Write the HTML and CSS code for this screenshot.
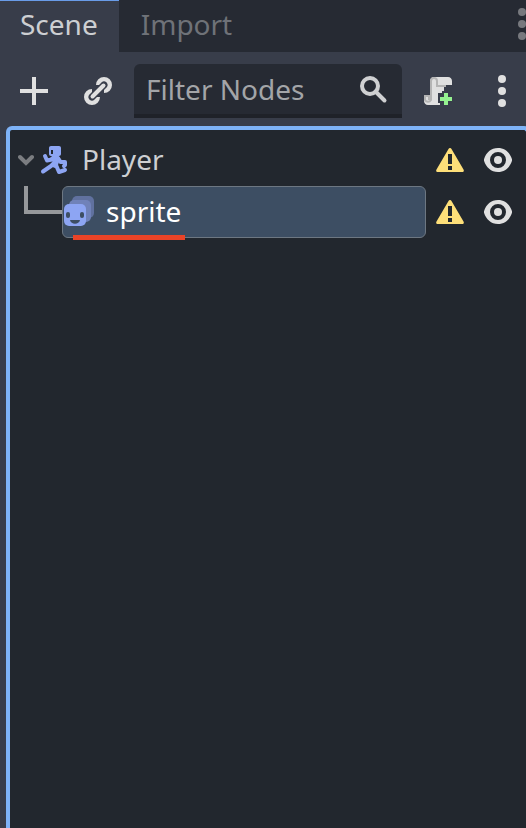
FILE: index.html
```html
<!DOCTYPE html>
<html lang="en">
<head>
<meta charset="utf-8">
<meta name="viewport" content="width=device-width, initial-scale=1">
<title>Scene</title>
<link rel="stylesheet" href="styles.css">
</head>
<body>
<svg class="defs" aria-hidden="true">
  <symbol id="warning" viewBox="0 0 32 32">
    <path fill="#fedf79" d="M16 4c.7 0 1.2.3 1.5.9l12 20.5c.9 1.400.1 2.600-1.300 2.600H3.800c-1.400 0-2.200-1.200-1.300-2.600l12-20.500c.3-.6.8-.9 1.500-.9z"/>
    <path fill="#22272e" d="M14 10h4v10h-4zM14 22h4v4h-4z"/>
  </symbol>
  <symbol id="eye" viewBox="0 0 32 32">
    <path fill="#e0e0e0" fill-rule="evenodd" d="M16 4C9 4 4.200 8.500 2 15.200v1.600C4.200 23.500 9 28 16 28s11.800-4.500 14-11.200v-1.600C27.800 8.500 23 4 16 4zm0 4a8 8 0 1 1 0 16 8 8 0 0 1 0-16z"/>
    <circle cx="16" cy="16" r="4" fill="#e0e0e0"/>
  </symbol>
  <symbol id="dots" viewBox="0 0 8 32">
    <circle cx="4" cy="4" r="4"/><circle cx="4" cy="16" r="4"/><circle cx="4" cy="28" r="4"/>
  </symbol>
</svg>
<main class="dock">
  <nav class="tabs">
    <button class="tab active">Scene</button>
    <button class="tab">Import</button>
    <button class="tab-menu" aria-label="Dock options"><svg class="dots"><use href="#dots"/></svg></button>
  </nav>
  <div class="toolbar">
    <button class="tool" aria-label="Add node">
      <svg class="icon" viewBox="0 0 32 32"><path fill="#e0e0e0" d="M14 2h4v12h12v4H18v12h-4V18H2v-4h12z"/></svg>
    </button>
    <button class="tool" aria-label="Instance scene">
      <svg class="icon" viewBox="0 0 32 32">
        <g fill="none" stroke="#e0e0e0" stroke-width="5">
          <path d="M16.500 10a5.500 5.500 0 1 1 5.500 5.500"/>
          <path d="M15.500 22a5.500 5.500 0 1 1-5.500-5.500"/>
        </g>
        <path d="M10 22L22 10" stroke="#383d4a" stroke-width="7" stroke-linecap="round"/>
        <path d="M10.500 21.500L21.500 10.500" stroke="#e0e0e0" stroke-width="4" stroke-linecap="round"/>
      </svg>
    </button>
    <label class="filter">
      <input type="text" placeholder="Filter Nodes" aria-label="Filter Nodes">
      <svg class="icon" viewBox="0 0 32 32"><g fill="none" stroke="#cfd0d2" stroke-width="4"><circle cx="12" cy="13" r="8"/><path d="M17.500 18.500L26.500 27.500" stroke-linecap="round"/></g></svg>
    </label>
    <button class="tool script" aria-label="Attach script">
      <svg class="icon" viewBox="0 0 32 32">
        <path fill="#e0e0e0" d="M12 2h14c2.500 0 4 2 4 4v4h-6v2h-2v4h-2v2h-4v8h2v4H6c-2.500 0-4-2-4-4v-5h6V6c0-2 1.500-4 4-4z"/>
        <path fill="none" stroke="#b4b4b4" stroke-width="2" d="M3 20v5a3.500 3.500 0 0 0 6 0V6c0-4 6-4 6 0v5h9M3 21h4v4"/>
        <path fill="#383d4a" d="M20 16h10v4h2v10H18v-2h-2v-8h4z"/>
        <path fill="#95f290" d="M22 18h4v4h4v4h-4v4h-4v-4h-4v-4h4z"/>
      </svg>
    </button>
    <button class="tool more" aria-label="More options"><svg class="dots"><use href="#dots"/></svg></button>
  </div>
  <section class="tree" aria-label="Scene tree">
    <div class="row">
      <div class="node root">
        <svg class="arrow" viewBox="0 0 16 12"><path d="M2 3l6 6 6-6" fill="none" stroke="#7b7d81" stroke-width="4" stroke-linecap="round"/></svg>
        <svg class="icon" viewBox="0 0 32 32">
          <path fill="#8da5f3" fill-rule="evenodd" d="M13 2h8c1.200 0 2 .8 2 2v6c0 1.200-.8 2-2 2h-8c-1.200 0-2-.8-2-2V4c0-1.200.8-2 2-2zm0 4v4h2V6z"/>
          <path fill="#8da5f3" d="M12 14l3-3h5l2 4-2 6-3 3-5-2 3-5z"/>
          <path fill="none" stroke="#8da5f3" stroke-width="4" stroke-linecap="round" stroke-linejoin="round" d="M7 12l2 4.500 5-1M20 14l2.500 4H27v3l-1 1M5 27.500l8-5.500 3-3M18 21l3 7 6-2"/>
        </svg>
        <span class="name">Player</span>
      </div>
      <button class="state" aria-label="Player warning"><svg class="icon"><use href="#warning"/></svg></button>
      <button class="state" aria-label="Toggle Player visibility"><svg class="icon"><use href="#eye"/></svg></button>
    </div>
    <div class="row child">
      <div class="branch"></div>
      <div class="node selected">
        <svg class="icon" viewBox="0 0 32 32">
          <rect x="8" y="0" width="22" height="22" rx="5" fill="#60719f"/>
          <rect x="5" y="4" width="22" height="22" rx="5" fill="#7082b9"/>
          <rect x="0" y="8" width="22" height="22" rx="5" fill="#8da5f3"/>
          <g fill="#3d4e63"><rect x="2" y="16" width="4" height="6" rx="2"/><rect x="16" y="16" width="4" height="6" rx="2"/><path d="M6 24h10c-1 5-9 5-10 0z"/></g>
        </svg>
        <span class="name">sprite</span>
      </div>
      <button class="state" aria-label="sprite warning"><svg class="icon"><use href="#warning"/></svg></button>
      <button class="state" aria-label="Toggle sprite visibility"><svg class="icon"><use href="#eye"/></svg></button>
    </div>
  </section>
</main>
</body>
</html>
```
FILE: styles.css
```css
* { box-sizing: border-box; }
body {
  margin: 0;
  background: #383d4a;
  color: #cdcfd2;
  font: 28px/36px "Noto Sans", sans-serif;
}
button {
  border: 0;
  padding: 0;
  background: none;
  color: inherit;
  font: inherit;
}
svg { display: block; flex: none; }
.defs { position: absolute; width: 0; height: 0; }
.icon { width: 32px; height: 32px; }
.dots { width: 8px; height: 32px; fill: #e0e0e0; }
.dock {
  display: flex;
  flex-direction: column;
  min-height: 100vh;
  overflow: hidden;
}
.tabs {
  display: flex;
  height: 52px;
  background: #262a33;
}
.tab {
  padding: 0 22px 4px;
  color: #6f7278;
}
.tab.active {
  padding: 0 21px 5px 20px;
  border-top: 1px solid #699ce8;
  background: #383d4a;
  color: #cdcfd2;
}
.tab-menu {
  margin-left: auto;
  padding-bottom: 4px;
}
.tab-menu .dots { fill: #77797e; }
.toolbar {
  display: flex;
  align-items: center;
  padding: 12px 20px 8px 18px;
}
.tool { margin-right: 32px; }
.tool:nth-child(2) { margin-right: 20px; }
.tool.script { margin: 0 44px 0 20px; }
.tool.more { margin: 0; }
.filter {
  display: flex;
  flex: 1;
  align-items: center;
  min-width: 0;
  height: 54px;
  padding: 0 12px;
  border-bottom: 4px solid #1f2229;
  border-radius: 6px 6px 0 0;
  background: #262a33;
}
.filter input {
  flex: 1;
  min-width: 0;
  padding: 0;
  border: 0;
  outline: 0;
  background: none;
  color: #cdcfd2;
  font: inherit;
}
.filter input::placeholder { color: #a3a5a8; opacity: 1; }
.tree {
  flex: 1;
  margin: 0 -4px 0 6px;
  padding: 4px 12px 0 4px;
  border: 4px solid #7eb3f8;
  border-bottom: 0;
  border-radius: 6px 6px 0 0;
  background: #22272e;
}
.row {
  display: flex;
  align-items: center;
  height: 52px;
}
.node {
  display: flex;
  flex: 1;
  align-items: center;
  height: 52px;
  min-width: 0;
}
.root { padding-left: 4px; }
.arrow { width: 16px; height: 12px; margin-right: 4px; }
.name { padding-bottom: 2px; }
.root .name { margin-left: 12px; }
.state { margin-left: 16px; }
.row .node + .state { margin-left: 8px; }
.branch {
  align-self: flex-start;
  width: 38px;
  height: 28px;
  margin-left: 10px;
  border-left: 4px solid #96989b;
  border-bottom: 4px solid #96989b;
}
.selected {
  position: relative;
  padding-left: 1px;
  border: 1px solid #6d7782;
  border-radius: 6px;
  background: #3d4e63;
  color: #fff;
}
.selected .name { margin-left: 10px; }
.selected::after {
  content: "";
  position: absolute;
  left: 10px;
  bottom: -3px;
  width: 112px;
  height: 5px;
  background: #ea4327;
}
```
